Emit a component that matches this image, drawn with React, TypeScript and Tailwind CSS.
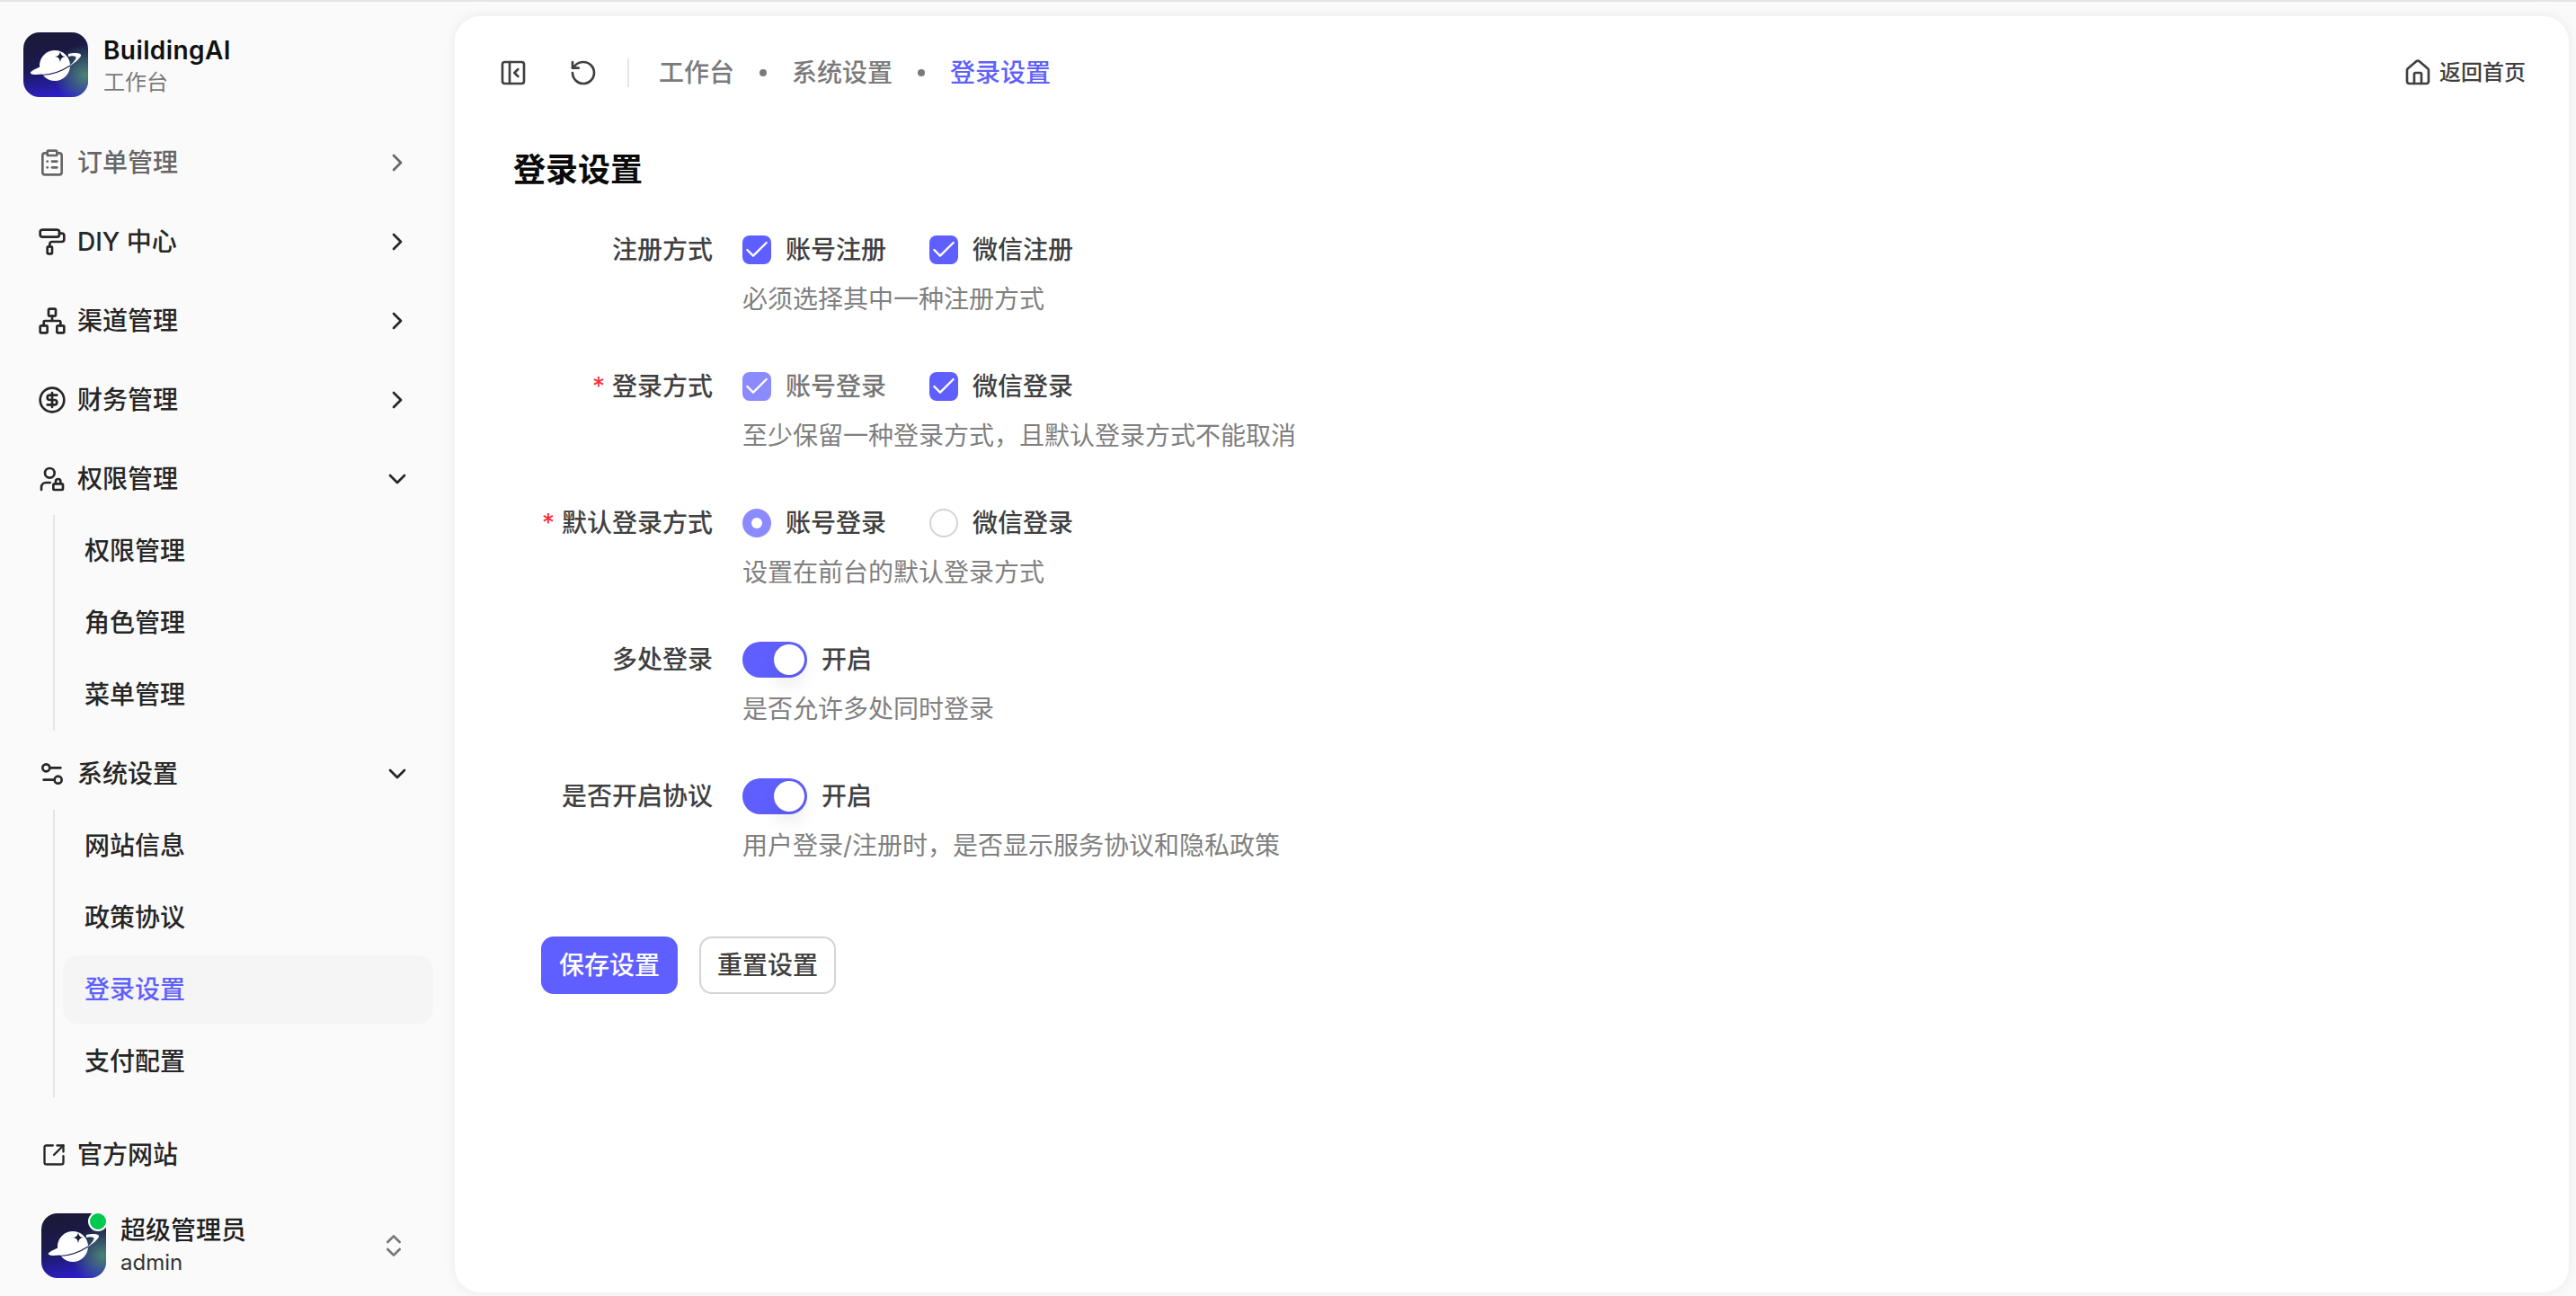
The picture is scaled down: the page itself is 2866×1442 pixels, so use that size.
import React from "react";
import {
  Check,
  ChevronDown,
  ChevronRight,
  ChevronsUpDown,
  CircleDollarSign,
  ClipboardList,
  House,
  Network,
  PaintRoller,
  PanelLeftClose,
  RotateCcw,
  Settings2,
  SquareArrowOutUpRight,
  UserLock,
} from "lucide-react";

const Logo = ({ id, className }: { id: string; className: string }) => (
  <svg viewBox="0 0 72 72" className={className}>
    <defs>
      <linearGradient id={`${id}-base`} x1="0.25" y1="0" x2="0.45" y2="1">
        <stop offset="0" stopColor="#1c1836" />
        <stop offset="0.5" stopColor="#1a1a4e" />
        <stop offset="1" stopColor="#2c1ecb" />
      </linearGradient>
      <radialGradient id={`${id}-glow`} cx="0.95" cy="0.66" r="0.48">
        <stop offset="0" stopColor="#4a8570" />
        <stop offset="1" stopColor="#4a8570" stopOpacity="0" />
      </radialGradient>
    </defs>
    <rect width="72" height="72" rx="18" fill={`url(#${id}-base)`} />
    <rect width="72" height="72" rx="18" fill={`url(#${id}-glow)`} />
    <circle cx="35" cy="37" r="17" fill="#fff" />
    <path d="M41 21c.6 4 2 5.500 6 6-4 .5-5.400 2-6 6.500-.6-4.500-2-6-6-6.500 4-.5 5.400-2 6-6z" fill="#17203a" />
    <path d="M20 38c-8 3-13 6-12 7.500 2 2.500 12 1.500 22-.5-7 0-10-2-10-7z" fill="#fff" />
    <path d="M50 24c8-2 15-1 14 2-1 3-7 8-13 12 6-6 9-10 7-11-2-1-5-1-8 0z" fill="#fff" />
    <path d="M21 47.500c11-.5 22-4.500 31-10.500" fill="none" stroke="#1b1b55" strokeWidth="1.200" />
  </svg>
);

const menuRow = "flex h-20 items-center gap-3 pl-[42px] pr-12 text-[28px] font-medium";

const NavItem = ({
  icon: Icon,
  label,
  open,
  muted,
}: {
  icon: React.ElementType;
  label: string;
  open?: boolean;
  muted?: boolean;
}) => (
  <div className={`${menuRow} ${muted ? "text-[#666666]" : "text-[#262626]"}`}>
    <Icon size={32} className="shrink-0" />
    <span className="flex-1">{label}</span>
    {open ? <ChevronDown size={32} /> : <ChevronRight size={32} />}
  </div>
);

const SubMenu = ({ items, active }: { items: string[]; active?: string }) => (
  <div className="ml-[59px] flex w-[423px] flex-col border-l-2 border-[#e5e5e5] pl-[9px]">
    {items.map((item) => (
      <div key={item} className="py-0.5">
        <div
          className={`flex h-[76px] items-center rounded-2xl pl-6 text-[28px] font-medium ${
            item === active ? "bg-[#f5f5f5] text-[#5f5fff]" : "text-[#262626]"
          }`}
        >
          {item}
        </div>
      </div>
    ))}
  </div>
);

const Sidebar = () => (
  <aside className="flex w-[506px] shrink-0 flex-col">
    <div className="flex h-[72px] mt-[34px] items-center gap-[17px] pl-[26px]">
      <Logo id="brand" className="h-[72px] w-[72px]" />
      <div className="flex flex-col pt-[3px]">
        <span className="text-[28px] leading-[36px] font-semibold tracking-[0.4px] text-[#111111]">BuildingAI</span>
        <span className="text-[24px] leading-[36px] text-[#7a7a7a]">工作台</span>
      </div>
    </div>
    <nav className="mt-[33px] flex flex-col gap-2">
      <NavItem icon={ClipboardList} label="订单管理" muted />
      <NavItem icon={PaintRoller} label="DIY 中心" />
      <NavItem icon={Network} label="渠道管理" />
      <NavItem icon={CircleDollarSign} label="财务管理" />
      <div className="flex flex-col">
        <NavItem icon={UserLock} label="权限管理" open />
        <SubMenu items={["权限管理", "角色管理", "菜单管理"]} />
      </div>
      <div className="flex flex-col">
        <NavItem icon={Settings2} label="系统设置" open />
        <SubMenu items={["网站信息", "政策协议", "登录设置", "支付配置"]} active="登录设置" />
      </div>
    </nav>
    <div className="mt-6 flex h-20 items-center gap-3 pl-[46px] text-[28px] font-medium text-[#262626]">
      <SquareArrowOutUpRight size={28} />
      <span>官方网站</span>
    </div>
    <div className="mt-[25px] flex items-center pl-[46px] pr-[52px]">
      <div className="relative h-[72px] w-[72px]">
        <Logo id="avatar" className="h-[72px] w-[72px]" />
        <span className="absolute -top-0.5 -right-0.5 h-[22px] w-[22px] rounded-full border-2 border-white bg-[#00c950]" />
      </div>
      <div className="ml-4 flex flex-1 flex-col">
        <span className="text-[28px] leading-[38px] font-medium text-[#1f1f1f]">超级管理员</span>
        <span className="text-[24px] leading-[34px] text-[#333333]">admin</span>
      </div>
      <ChevronsUpDown size={32} className="text-[#777777]" />
    </div>
  </aside>
);

const Box = ({ faded }: { faded?: boolean }) => (
  <span
    className={`flex h-8 w-8 items-center justify-center rounded-lg ${faded ? "bg-[#8b8bff]" : "bg-[#5f5fff]"}`}
  >
    <Check size={32} strokeWidth={1.75} className="text-white" />
  </span>
);

const Choice = ({ control, label, faded }: { control: React.ReactNode; label: string; faded?: boolean }) => (
  <div className={`flex w-[208px] items-center gap-4 ${faded ? "text-[#777777]" : "text-[#404040]"}`}>
    {control}
    <span>{label}</span>
  </div>
);

const Toggle = () => (
  <div className="flex items-center gap-4">
    <span className="flex h-10 w-[72px] items-center justify-end rounded-full bg-[#5f5fff] pr-[3px]">
      <span className="h-[34px] w-[34px] rounded-full bg-white shadow-[0_12px_18px_rgba(0,0,0,0.08)]" />
    </span>
    <span>开启</span>
  </div>
);

const FormRow = ({
  label,
  required,
  help,
  children,
}: {
  label: string;
  required?: boolean;
  help: string;
  children: React.ReactNode;
}) => (
  <div className="flex gap-[33px] text-[28px] font-medium text-[#404040]">
    <div className="flex h-10 w-[222px] items-center justify-end gap-2">
      {required && <span className="font-normal text-[#fb2c36]">*</span>}
      <span>{label}</span>
    </div>
    <div className="flex flex-col gap-[15px]">
      <div className="flex h-10 items-center">{children}</div>
      <p className="text-[28px] leading-10 font-normal text-[#808080]">{help}</p>
    </div>
  </div>
);

const Header = () => (
  <header className="flex h-[126px] items-center pl-[49px] pr-12 text-[28px]">
    <PanelLeftClose size={32} className="text-[#404040]" />
    <RotateCcw size={32} className="ml-[46px] text-[#404040]" />
    <span className="ml-[33px] h-8 w-0.5 bg-[#e5e5e5]" />
    <span className="ml-[33px] font-medium text-[#7a7a7a]">工作台</span>
    <span className="mx-7 h-2 w-2 rounded-full bg-[#7a7a7a]" />
    <span className="font-medium text-[#7a7a7a]">系统设置</span>
    <span className="mx-7 h-2 w-2 rounded-full bg-[#7a7a7a]" />
    <span className="font-medium text-[#5f5fff]">登录设置</span>
    <div className="ml-auto flex items-center gap-2 text-[24px] font-medium text-[#404040]">
      <House size={32} />
      <span>返回首页</span>
    </div>
  </header>
);

const App = () => (
  <div className="flex h-screen w-full overflow-hidden border-t-2 border-[#e5e5e5] bg-[#fafafa] font-['Inter','Noto_Sans_CJK_SC',sans-serif]">
    <Sidebar />
    <main className="mt-4 mb-1 mr-2 flex-1 rounded-[28px] bg-white shadow-[0_0_14px_rgba(0,0,0,0.07)]">
      <Header />
      <div className="pl-[65px]">
        <h1 className="mt-5 text-[36px] leading-[50px] font-semibold text-[#0a0a0a]">登录设置</h1>
        <form className="mt-[44px] flex flex-col gap-[57px]">
          <FormRow label="注册方式" help="必须选择其中一种注册方式">
            <Choice control={<Box />} label="账号注册" />
            <Choice control={<Box />} label="微信注册" />
          </FormRow>
          <FormRow label="登录方式" required help="至少保留一种登录方式，且默认登录方式不能取消">
            <Choice control={<Box faded />} label="账号登录" faded />
            <Choice control={<Box />} label="微信登录" />
          </FormRow>
          <FormRow label="默认登录方式" required help="设置在前台的默认登录方式">
            <Choice
              control={
                <span className="flex h-8 w-8 items-center justify-center rounded-full bg-[#8b8bff]">
                  <span className="h-3 w-3 rounded-full bg-white" />
                </span>
              }
              label="账号登录"
            />
            <Choice
              control={<span className="h-8 w-8 rounded-full border-2 border-[#d4d4d4] bg-white" />}
              label="微信登录"
            />
          </FormRow>
          <FormRow label="多处登录" help="是否允许多处同时登录">
            <Toggle />
          </FormRow>
          <FormRow label="是否开启协议" help="用户登录/注册时，是否显示服务协议和隐私政策">
            <Toggle />
          </FormRow>
        </form>
        <div className="mt-[81px] ml-[31px] flex gap-6 text-[28px] font-medium">
          <button className="h-16 w-[152px] rounded-[14px] bg-[#5f5fff] text-white">保存设置</button>
          <button className="h-16 w-[152px] rounded-[14px] border-2 border-[#d4d4d4] bg-white text-[#404040]">
            重置设置
          </button>
        </div>
      </div>
    </main>
  </div>
);

export default App;
